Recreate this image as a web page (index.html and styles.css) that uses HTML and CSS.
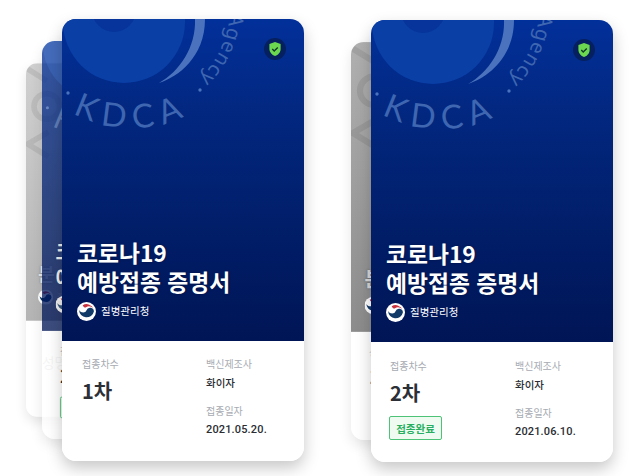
FILE: index.html
```html
<!DOCTYPE html>
<html lang="ko">
<head>
<meta charset="utf-8">
<title>코로나19 예방접종 증명서</title>
<link rel="stylesheet" href="styles.css">
</head>
<body>
<svg class="defs" width="0" height="0" aria-hidden="true">
  <defs>
    <path id="kdcaArc" d="M-35.7 48 A122 122 0 0 0 175.7 48"/>
    <path id="agencyArc" d="M167.8 -6 A98 98 0 0 1 113.2 75.8"/>
    <symbol id="seal" viewBox="0 0 242 322">
      <circle cx="62" cy="3" r="61" fill="#0a3fa6"/>
      <circle cx="52" cy="-9" r="22" fill="#06349a"/>
      <path d="M133 0 C134 28 118 52 97 64 C116 58 143 38 143 0 Z" fill="#4a72bd"/>
      <circle cx="6" cy="74" r="1.7" fill="#4a72bd"/>
      <circle cx="138" cy="71" r="1.7" fill="#4a72bd"/>
    </symbol>
    <symbol id="swirl" viewBox="0 0 242 322">
      <g fill="none" stroke="#000" stroke-opacity=".08" stroke-width="7">
        <path d="M0 6 L26 22"/>
        <circle cx="26" cy="54" r="16"/>
        <path d="M28 86 L2 101 L28 117"/>
      </g>
    </symbol>
    <symbol id="emblem" viewBox="0 0 20 20">
      <circle cx="10" cy="10" r="10" fill="#fff"/>
      <path d="M2.2 8.5 A7.9 7.9 0 0 0 17.8 10 A4 4 0 0 0 10 8.8 C9 12 4 12 2.2 8.5 Z" fill="#123a68"/>
      <path d="M6 3.4 A7.9 7.9 0 0 1 17.6 7.8 A5.4 5.4 0 0 0 9.5 5.6 C8.5 6.4 6.8 5.2 6 3.4 Z" fill="#c8313d"/>
    </symbol>
    <symbol id="shield" viewBox="0 0 22 22">
      <circle cx="11" cy="11" r="11" fill="#06205f"/>
      <path d="M11 4 L16.6 5.9 V11 C16.6 14.4 14.2 16.8 11 18 C7.8 16.8 5.4 14.4 5.4 11 V5.9 Z" fill="#6cd84f"/>
      <path d="M8.3 11 L10.2 12.9 L13.8 9.4" fill="none" stroke="#123a2a" stroke-width="1.4"/>
    </symbol>
  </defs>
</svg>

<main class="page">
  <section class="stack stack-left">
    <article class="card card-far">
      <div class="card-top card-top-pale">
        <svg class="seal"><use href="#swirl"/></svg>
        <div class="title title-low">분 증명서</div>
        <div class="agency"><svg class="emblem"><use href="#emblem"/></svg><span>질병관리청</span></div>
      </div>
      <div class="card-bottom card-bottom-faint">
        <div class="far-name">성명</div>
      </div>
    </article>
    <article class="card card-mid card-blue">
      <div class="card-top">
        <svg class="seal"><use href="#seal"/><text class="seal-kdca"><textPath href="#kdcaArc" startOffset="50%" text-anchor="middle">KDCA</textPath></text></svg>
        <div class="title">코로나19<br>예방접종 증명서</div>
        <div class="agency"><svg class="emblem"><use href="#emblem"/></svg><span>질병관리청</span></div>
      </div>
      <div class="card-bottom">
        <div class="col"><div class="label">접종차수</div><div class="dose">2차</div><div class="badge">접종완료</div></div>
        <div class="col col-right"><div class="label">백신제조사</div><div class="value">화이자</div><div class="label label-gap">접종일자</div><div class="value date">2021.06.10.</div></div>
      </div>
    </article>
    <article class="card card-front">
      <div class="card-top">
        <svg class="seal"><use href="#seal"/><text class="seal-kdca"><textPath href="#kdcaArc" startOffset="50%" text-anchor="middle">KDCA</textPath></text><text class="seal-agency"><textPath href="#agencyArc">Agency</textPath></text></svg>
        <svg class="shield"><use href="#shield"/></svg>
        <div class="title">코로나19<br>예방접종 증명서</div>
        <div class="agency"><svg class="emblem"><use href="#emblem"/></svg><span>질병관리청</span></div>
      </div>
      <div class="card-bottom">
        <div class="col"><div class="label">접종차수</div><div class="dose">1차</div></div>
        <div class="col col-right"><div class="label">백신제조사</div><div class="value">화이자</div><div class="label label-gap">접종일자</div><div class="value date">2021.05.20.</div></div>
      </div>
    </article>
  </section>

  <section class="stack stack-right">
    <article class="card card-mid">
      <div class="card-top card-top-gray">
        <svg class="seal"><use href="#swirl"/></svg>
        <div class="title title-low">분 증명서</div>
        <div class="agency"><svg class="emblem"><use href="#emblem"/></svg><span>질병관리청</span></div>
      </div>
      <div class="card-bottom card-bottom-faint">
        <div class="col"><div class="label">성명</div><div class="dose">1차</div></div>
      </div>
    </article>
    <article class="card card-front">
      <div class="card-top">
        <svg class="seal"><use href="#seal"/><text class="seal-kdca"><textPath href="#kdcaArc" startOffset="50%" text-anchor="middle">KDCA</textPath></text><text class="seal-agency"><textPath href="#agencyArc">Agency</textPath></text></svg>
        <svg class="shield"><use href="#shield"/></svg>
        <div class="title">코로나19<br>예방접종 증명서</div>
        <div class="agency"><svg class="emblem"><use href="#emblem"/></svg><span>질병관리청</span></div>
      </div>
      <div class="card-bottom card-bottom-shift">
        <div class="col"><div class="label">접종차수</div><div class="dose">2차</div><div class="badge">접종완료</div></div>
        <div class="col col-right"><div class="label">백신제조사</div><div class="value">화이자</div><div class="label label-gap">접종일자</div><div class="value date">2021.06.10.</div></div>
      </div>
    </article>
  </section>
</main>
</body>
</html>
```
FILE: styles.css
```css
* { box-sizing: border-box; }
html, body { margin: 0; background: #fff; }
body { width: 638px; height: 476px; overflow: hidden; font-family: "Noto Sans CJK KR", "Noto Sans", sans-serif; }
.defs { display: block; height: 0; }
.page { display: flex; padding-top: 19px; }
.stack { display: grid; grid-template-columns: 242px; }
.stack-left { margin-left: 62px; }
.stack-right { margin-left: 67px; padding-top: 1px; }
.card {
  grid-area: 1 / 1;
  width: 242px;
  height: 442px;
  border-radius: 14px;
  overflow: hidden;
  background: #fff;
  box-shadow: 0 7px 16px rgba(0,0,0,.22);
  display: flex;
  flex-direction: column;
}
.card-front { position: relative; z-index: 3; }
.card-mid { transform-origin: 0 50%; transform: translateX(-20px) scale(.9); z-index: 2; box-shadow: 0 6px 14px rgba(0,0,0,.1); }
.card-far { transform-origin: 0 50%; transform: translateX(-36px) scale(.8); z-index: 1; box-shadow: 0 6px 14px rgba(0,0,0,.1); }
.card-blue { background: transparent; }
.card-blue .card-top { opacity: .76; }
.card-blue .card-bottom { background: rgba(255,255,255,.72); }
.card-top {
  position: relative;
  height: 322px;
  overflow: hidden;
  background: linear-gradient(180deg, #02309a 0%, #02277f 30%, #011f6c 60%, #001555 100%);
  color: #fff;
  padding: 219px 15px 0;
}
.card-top-gray { background: linear-gradient(180deg, #b0b0b0 0%, #8c8c8c 100%); color: #d8d8d8; }
.card-top-pale { background: linear-gradient(180deg, #d0d0d0 0%, #b4b4b4 100%); color: #e6e6e6; }
.seal { position: absolute; left: 0; top: 0; width: 242px; height: 322px; }
.seal-kdca { font: 400 33px "Lato", sans-serif; fill: #3f66b0; letter-spacing: 8px; }
.seal-agency { font: 400 20px "Noto Sans", sans-serif; fill: #3f66b0; letter-spacing: 1px; }
.shield { position: absolute; right: 18px; top: 19px; width: 22px; height: 22px; display: block; }
.title { position: relative; font-size: 22.8px; font-weight: 700; line-height: 29px; text-shadow: 0 0 3px rgba(0,0,0,.3); }
.title-low { padding-top: 29px; }
.agency { position: relative; display: flex; align-items: center; gap: 5px; margin-top: 5px; font-size: 10.5px; line-height: 20px; }
.emblem { width: 19px; height: 19px; display: block; flex: none; }
.card-bottom { flex: 1; display: flex; padding: 16px 20px 0; background: #fff; }
.card-bottom-shift { padding-left: 19px; padding-top: 17px; }
.card-bottom-shift .col-right { margin-left: 1px; }
.card-bottom-shift .badge { margin-left: -1px; }
.card-bottom-faint { opacity: .6; }
.col { width: 124px; flex: none; }
.col-right { width: 80px; }
.label { font-size: 10px; line-height: 14px; color: #a7abb2; }
.label-gap { margin-top: 14px; }
.dose { font-size: 20px; font-weight: 700; line-height: 26px; margin-top: 7px; color: #2c2f36; }
.value { font-size: 10.5px; font-weight: 500; line-height: 14px; color: #2a2d33; margin-top: 5px; }
.date { font-family: "Roboto", sans-serif; font-size: 11px; font-weight: 500; letter-spacing: .15px; }
.badge {
  display: flex; align-items: center; justify-content: center;
  width: 53px; height: 24px; margin-top: 10px;
  border: 1px solid #4cc377; border-radius: 2px;
  background: #effbf1; color: #27ae60;
  font-size: 10.5px; font-weight: 700;
}
.far-name { font-size: 17px; line-height: 24px; color: #c4c4c4; margin-top: 24px; }
```
